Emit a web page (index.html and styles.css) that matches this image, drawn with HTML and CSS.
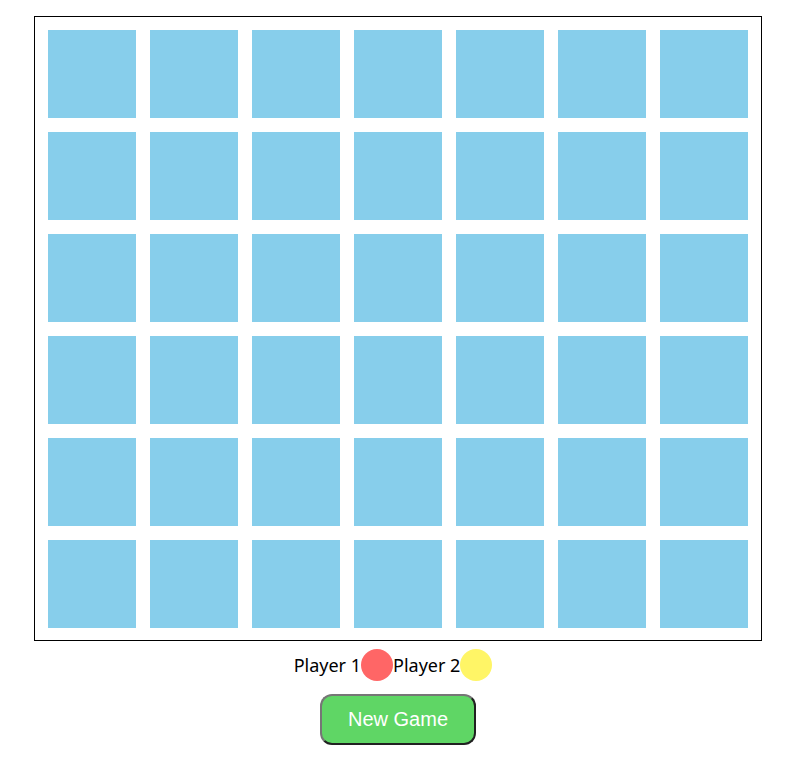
FILE: index.html
```html
<!DOCTYPE html>
<html>
<head>
<meta charset="utf-8">
<link rel="stylesheet" href="styles.css">
</head>
<body>
<div class="game">
  <div class="board">
    <div class="cell"></div><div class="cell"></div><div class="cell"></div><div class="cell"></div><div class="cell"></div><div class="cell"></div><div class="cell"></div>
    <div class="cell"></div><div class="cell"></div><div class="cell"></div><div class="cell"></div><div class="cell"></div><div class="cell"></div><div class="cell"></div>
    <div class="cell"></div><div class="cell"></div><div class="cell"></div><div class="cell"></div><div class="cell"></div><div class="cell"></div><div class="cell"></div>
    <div class="cell"></div><div class="cell"></div><div class="cell"></div><div class="cell"></div><div class="cell"></div><div class="cell"></div><div class="cell"></div>
    <div class="cell"></div><div class="cell"></div><div class="cell"></div><div class="cell"></div><div class="cell"></div><div class="cell"></div><div class="cell"></div>
    <div class="cell"></div><div class="cell"></div><div class="cell"></div><div class="cell"></div><div class="cell"></div><div class="cell"></div><div class="cell"></div>
  </div>
  <div class="players">
    <span class="label">Player 1</span><span class="disc red"></span><span class="label">Player 2</span><span class="disc yellow"></span>
  </div>
  <div class="actions">
    <button class="new-game">New Game</button>
  </div>
</div>
</body>
</html>
```
FILE: styles.css
```css
html, body {
  margin: 0;
  padding: 0;
  background: #fff;
}
.game {
  padding: 16px 0 0 34px;
  width: 728px;
}
.board {
  box-sizing: border-box;
  width: 728px;
  border: 1px solid #000;
  padding: 13px 13px 12px 13px;
  display: grid;
  grid-template-columns: repeat(7, 88px);
  grid-auto-rows: 88px;
  gap: 14px;
}
.cell {
  background: #87ceeb;
}
.players {
  display: flex;
  justify-content: center;
  align-items: center;
  margin-top: 8px;
  margin-left: -10px;
  height: 32px;
  font-family: "Noto Sans", "Open Sans", sans-serif;
  font-size: 18px;
  color: #000;
}
.label {
  line-height: 32px;
}
.disc {
  width: 32px;
  height: 32px;
  border-radius: 50%;
}
.red { background: #ff6666; }
.yellow { background: #fff566; }
.actions {
  display: flex;
  justify-content: center;
  margin-top: 13px;
  margin-left: 0;
}
.new-game {
  box-sizing: border-box;
  width: 156px;
  height: 51px;
  border: 2px outset #767676;
  border-radius: 12px;
  background: #5fd665;
  color: #fff;
  font-family: "Liberation Sans", Arial, sans-serif;
  font-size: 20px;
  padding: 0;
}
```
